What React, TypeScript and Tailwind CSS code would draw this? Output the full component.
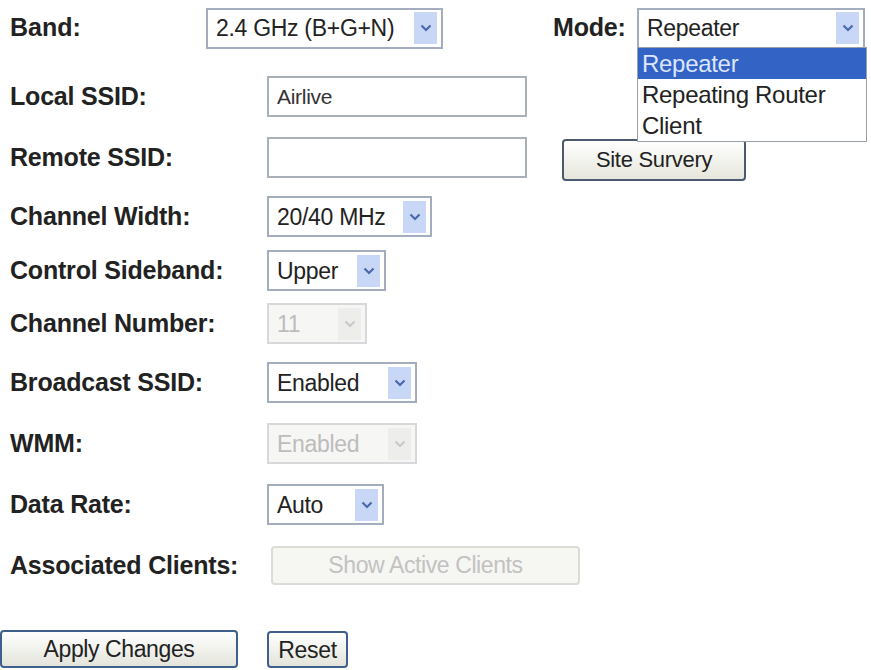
import React from "react";

const FONT = { fontFamily: '"Liberation Sans", Arial, sans-serif' };

function Chevron({ disabled = false }: { disabled?: boolean }) {
  return (
    <svg width="12" height="8" viewBox="0 0 12 8">
      <path
        d="M1.5 1.5 L6 6 L10.5 1.5"
        fill="none"
        stroke={disabled ? "#c8cacc" : "#4a69ad"}
        strokeWidth="2.2"
      />
    </svg>
  );
}

interface SelectProps {
  value: string;
  width: string;
  disabled?: boolean;
}

function Select({ value, width, disabled = false }: SelectProps) {
  return (
    <div
      className={`flex h-[41px] items-center border-2 pl-2 pr-[4px] ${width} ${
        disabled ? "border-[#d6d8da] bg-[#f6f6f4] text-[#bcbcbc]" : "border-[#a3adbd] bg-white text-[#222]"
      }`}
    >
      <span className="flex-1 whitespace-nowrap text-[23px] leading-[30px] tracking-[-0.3px]">{value}</span>
      <span
        className={`flex h-[32px] w-[23px] items-center justify-center ${
          disabled ? "bg-[#ededeb]" : "bg-[#c9d7f6]"
        }`}
      >
        <Chevron disabled={disabled} />
      </span>
    </div>
  );
}

function TextInput({ value = "" }: { value?: string }) {
  return (
    <div className="flex h-[41px] w-[260px] items-center border-2 border-[#a9b0b8] bg-white pl-2 text-[21px] tracking-[-0.3px] text-[#333]">
      {value}
    </div>
  );
}

function Row({ label, h, children }: { label: string; h: string; children: React.ReactNode }) {
  return (
    <div className={`flex items-center ${h}`}>
      <div className="w-[267px] whitespace-nowrap pl-[10px] text-[25px] font-bold tracking-[-0.2px] text-[#222]">
        {label}
      </div>
      {children}
    </div>
  );
}

export default function App() {
  return (
    <div className="relative h-[670px] w-[871px] overflow-hidden bg-white" style={FONT}>
      {/* Band / Mode */}
      <div className="flex h-[56px] items-center">
        <div className="w-[206px] pl-[10px] text-[25px] font-bold text-[#222]">Band:</div>
        <Select value="2.4 GHz (B+G+N)" width="w-[237px]" />
        <div className="ml-[110px] w-[84px] text-[25px] font-bold tracking-[-0.2px] text-[#222]">Mode:</div>
        <div className="relative">
          <Select value="Repeater" width="w-[228px]" />
          <div className="absolute left-0 top-[39px] z-10 w-[230px] border border-[#9aa0a8] bg-white text-[24px] leading-[31px] tracking-[-0.3px] text-[#222]">
            <div className="bg-[#3463c6] pl-1 text-[#dbe6ff]">Repeater</div>
            <div className="pl-1">Repeating Router</div>
            <div className="pl-1">Client</div>
          </div>
        </div>
      </div>

      <div className="h-[20px]" />

      <Row label="Local SSID:" h="h-[41px]">
        <TextInput value="Airlive" />
      </Row>

      <div className="h-[20px]" />

      <Row label="Remote SSID:" h="h-[41px]">
        <TextInput />
        <button className="ml-[35px] mt-[4px] h-[42px] w-[184px] rounded-[4px] border-2 border-[#4a5a70] bg-gradient-to-b from-white to-[#e6e6dc] text-[22px] tracking-[-0.3px] text-[#222]">
          Site Survery
        </button>
      </Row>

      <div className="h-[18px]" />

      <Row label="Channel Width:" h="h-[41px]">
        <Select value="20/40 MHz" width="w-[165px]" />
      </Row>

      <div className="h-[13px]" />

      <Row label="Control Sideband:" h="h-[41px]">
        <Select value="Upper" width="w-[119px]" />
      </Row>

      <div className="h-[12px]" />

      <Row label="Channel Number:" h="h-[41px]">
        <Select value="11" width="w-[100px]" disabled />
      </Row>

      <div className="h-[18px]" />

      <Row label="Broadcast SSID:" h="h-[41px]">
        <Select value="Enabled" width="w-[150px]" />
      </Row>

      <div className="h-[20px]" />

      <Row label="WMM:" h="h-[41px]">
        <Select value="Enabled" width="w-[150px]" disabled />
      </Row>

      <div className="h-[20px]" />

      <Row label="Data Rate:" h="h-[41px]">
        <Select value="Auto" width="w-[117px]" />
      </Row>

      <div className="h-[20px]" />

      <Row label="Associated Clients:" h="h-[41px]">
        <button className="ml-[4px] h-[39px] w-[309px] rounded-[4px] border-2 border-[#dcdcd6] bg-[#f6f6f2] text-[23px] tracking-[-0.4px] text-[#c2c2c2]">
          Show Active Clients
        </button>
      </Row>

      <div className="h-[44px]" />

      <div className="flex items-center">
        <button className="h-[38px] w-[238px] rounded-[4px] border-2 border-[#3f5f8c] bg-gradient-to-b from-white to-[#e4e4dc] text-[23px] tracking-[-0.4px] text-[#222]">
          Apply Changes
        </button>
        <button className="ml-[29px] h-[37px] w-[81px] rounded-[4px] border-2 border-[#3f5f8c] bg-gradient-to-b from-white to-[#e4e4dc] text-[23px] tracking-[-0.3px] text-[#222]">
          Reset
        </button>
      </div>
    </div>
  );
}
